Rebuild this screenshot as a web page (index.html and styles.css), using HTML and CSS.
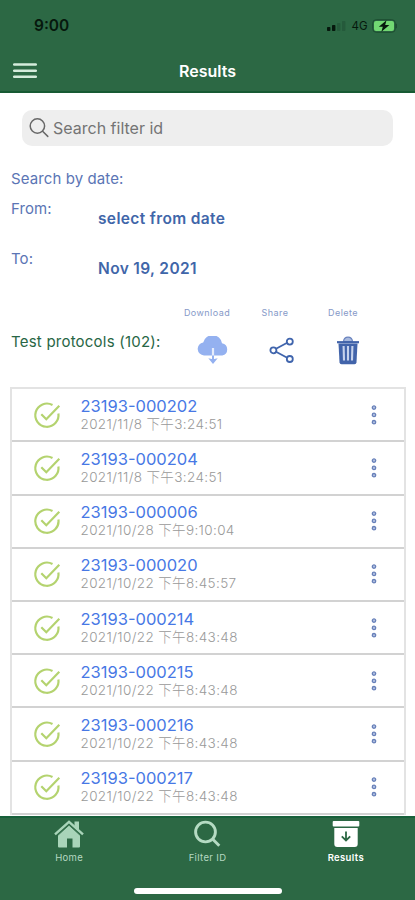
FILE: index.html
```html
<!DOCTYPE html>
<html lang="en">
<head>
<meta charset="utf-8">
<title>Results</title>
<link rel="stylesheet" href="styles.css">
</head>
<body>
<svg width="0" height="0" class="defs">
  <symbol id="check" viewBox="0 0 28 28"><path d="M19.500 4A11.600 11.600 0 1 0 25.400 12.500" /><path d="M8.300 13.200l5 5L26.300 4.700" /></symbol>
  <symbol id="dots" viewBox="0 0 8 22"><circle cx="4" cy="3.600" r="1.700"/><circle cx="4" cy="10.900" r="1.700"/><circle cx="4" cy="18.200" r="1.700"/></symbol>
</svg>
<div class="app">
  <header class="top">
    <div class="status">
      <span class="time">9:00</span>
      <div class="signals">
        <svg width="20" height="12" viewBox="0 0 20 12"><rect x="1" y="7" width="3.400" height="4" rx=".8" fill="#06180d"/><rect x="6" y="5" width="3.400" height="6" rx=".8" fill="#06180d"/><rect x="11" y="3" width="3.400" height="8" rx=".8" fill="#255a3b"/><rect x="16" y="1" width="3.400" height="10" rx=".8" fill="#255a3b"/></svg>
        <span class="net">4G</span>
        <svg width="26" height="14" viewBox="0 0 26 14"><rect x=".7" y=".7" width="22.600" height="12.600" rx="3.600" fill="#2c6844" stroke="#1d4d31"/><rect x="2" y="2" width="20" height="10" rx="2" fill="#72d873"/><path d="M24.400 4.800v4.400" stroke="#1d4d31" stroke-width="1.200"/><path d="M14.500 1.200L6.800 7.800h4l-1.400 5 8-6.700h-4.200z" fill="#06180d"/></svg>
      </div>
    </div>
    <div class="nav">
      <svg width="24" height="16" viewBox="0 0 24 16" stroke="#d5ecdc" stroke-width="2.500" stroke-linecap="round"><path d="M1.200 1.600h21.600M1.200 7.700h21.600M1.200 13.800h21.600"/></svg>
      <h1>Results</h1>
    </div>
  </header>
  <main>
    <div class="search">
      <svg width="20" height="20" viewBox="0 0 20 20" fill="none" stroke="#686868" stroke-width="1.500" stroke-linecap="round"><circle cx="8.400" cy="8" r="7.200"/><path d="M13.600 13.300l5.200 5.100"/></svg>
      <span>Search filter id</span>
    </div>
    <section class="dates">
      <div class="label by">Search by date:</div>
      <div class="daterow"><span class="label">From:</span><b>select from date</b></div>
      <div class="daterow"><span class="label">To:</span><b>Nov 19, 2021</b></div>
    </section>
    <section class="tools">
      <h2>Test protocols (102):</h2>
      <div class="tool download"><span>Download</span>
        <svg width="34" height="30" viewBox="0 0 34 30"><path d="M8 19.500a6.600 6.600 0 0 1-.8-13.100A9.600 9.600 0 0 1 26 7.300a6.200 6.200 0 0 1 .2 12.200z" fill="#94b1f0"/><path d="M17 12v8" stroke="#e6edfc" stroke-width="2.200"/><path d="M17 19.500v5" stroke="#94b1f0" stroke-width="2"/><path d="M12.300 22.300l4.700 1 4.700-1L17 28z" fill="#94b1f0"/></svg>
      </div>
      <div class="tool share"><span>Share</span>
        <svg width="26" height="30" viewBox="0 0 26 30" fill="none" stroke="#4065ad" stroke-width="1.800"><path d="M7 12.800L18.200 6.800M7 15.800l11.200 6"/><circle cx="4.400" cy="14.300" r="3"/><circle cx="20.800" cy="5.600" r="3"/><circle cx="20.800" cy="23" r="3"/></svg>
      </div>
      <div class="tool delete"><span>Delete</span>
        <svg width="24" height="30" viewBox="0 0 24 30" fill="none" stroke="#4264aa"><path d="M7.500 5.500Q8 1.200 12 1.200T16.500 5.500z" fill="#a9bade" stroke="#6882bd" stroke-width="1.200"/><path d="M1 6.200h22" stroke-width="2.200"/><path d="M2.500 7.500h19l-1 18.800q-.2 2-2 2H5.500q-1.800 0-2-2z" fill="#4264aa" stroke="none"/><path d="M7.600 10l.4 14.500M12 10v14.500M16.400 10l-.4 14.500" stroke="#c7d3ed" stroke-width="2.100"/></svg>
      </div>
    </section>
    <ul class="list">
      <li><svg class="ck"><use href="#check"/></svg><div class="info"><a>23193-000202</a><time>2021/11/8 下午3:24:51</time></div><svg class="dt"><use href="#dots"/></svg></li>
      <li><svg class="ck"><use href="#check"/></svg><div class="info"><a>23193-000204</a><time>2021/11/8 下午3:24:51</time></div><svg class="dt"><use href="#dots"/></svg></li>
      <li><svg class="ck"><use href="#check"/></svg><div class="info"><a>23193-000006</a><time>2021/10/28 下午9:10:04</time></div><svg class="dt"><use href="#dots"/></svg></li>
      <li><svg class="ck"><use href="#check"/></svg><div class="info"><a>23193-000020</a><time>2021/10/22 下午8:45:57</time></div><svg class="dt"><use href="#dots"/></svg></li>
      <li><svg class="ck"><use href="#check"/></svg><div class="info"><a>23193-000214</a><time>2021/10/22 下午8:43:48</time></div><svg class="dt"><use href="#dots"/></svg></li>
      <li><svg class="ck"><use href="#check"/></svg><div class="info"><a>23193-000215</a><time>2021/10/22 下午8:43:48</time></div><svg class="dt"><use href="#dots"/></svg></li>
      <li><svg class="ck"><use href="#check"/></svg><div class="info"><a>23193-000216</a><time>2021/10/22 下午8:43:48</time></div><svg class="dt"><use href="#dots"/></svg></li>
      <li><svg class="ck"><use href="#check"/></svg><div class="info"><a>23193-000217</a><time>2021/10/22 下午8:43:48</time></div><svg class="dt"><use href="#dots"/></svg></li>
    </ul>
  </main>
  <footer>
    <nav class="tabs">
      <div class="tab"><svg width="30" height="28" viewBox="0 0 30 28"><path d="M4 15L15 5l11 10v11.500q0 1-1 1h-6.500v-9h-5.500v9H5q-1 0-1-1z" fill="#a9d4b9"/><path d="M20.500 1.500H25v10l-4.500-4z" fill="#a9d4b9"/><path d="M2.500 16.600L15 5.200 27.500 16.600" fill="none" stroke="#2c6844" stroke-width=".8"/><path d="M1 14.400L15 1.800l14 12.600" fill="none" stroke="#a9d4b9" stroke-width="2.400"/></svg><span>Home</span></div>
      <div class="tab"><svg width="30" height="28" viewBox="0 0 30 28" fill="none" stroke="#b5dbc3" stroke-width="2.900"><circle cx="13.500" cy="12" r="9.900"/><path d="M20.300 18.800l7 7"/></svg><span>Filter ID</span></div>
      <div class="tab active"><svg width="30" height="28" viewBox="0 0 30 28"><rect x="1.700" y="1" width="26.600" height="5.600" rx="1" fill="#fff"/><path d="M3.300 8h23.400v16q0 3-3 3H6.300q-3 0-3-3z" fill="#fff"/><path d="M15 11.500v8.500M10.800 16.300L15 20.500l4.200-4.200" fill="none" stroke="#2c6844" stroke-width="1.800"/></svg><span>Results</span></div>
    </nav>
    <div class="home"></div>
  </footer>
</div>
</body>
</html>
```
FILE: styles.css
```css
* { box-sizing: border-box; }
body { margin: 0; background: #fff; font-family: Inter, "Noto Sans CJK SC", sans-serif; }
.defs { display: none; }
svg { display: block; flex: none; }
h1, h2, ul { margin: 0; padding: 0; font: inherit; }
.app { width: 415px; height: 900px; overflow: hidden; display: flex; flex-direction: column; }
.top { height: 93px; flex: none; background: #2c6844; border-bottom: 2px solid #175a33; }
.status { height: 50px; display: flex; justify-content: space-between; align-items: center; padding: 1px 17px 0 34px; color: #06180d; }
.time { font-size: 15.5px; font-weight: 600; }
.signals { display: flex; align-items: center; }
.net { font-size: 11.5px; letter-spacing: .3px; margin: 0 4px 0 5px; }
.nav { height: 42px; display: grid; grid-template-columns: 24px 1fr 24px; align-items: center; padding: 0 13px; }
.nav h1 { text-align: center; color: #fff; font-size: 16px; font-weight: 600; line-height: 20px; }
main { flex: 1; min-height: 0; }
.search { height: 36px; margin: 17px 22px 0; border-radius: 10px; background: #eee; display: flex; align-items: center; gap: 4px; padding-left: 7px; color: #747474; font-size: 16px; }
.dates { padding: 23px 11px 0; color: #5b75b5; font-size: 15px; line-height: 20px; letter-spacing: .1px; }
.daterow { display: flex; height: 50px; padding-top: 10px; }
.daterow .label { width: 87px; }
.daterow b { padding-top: 10px; color: #3f66a9; font-size: 15.5px; font-weight: 600; letter-spacing: .36px; }
.tools { height: 98.3px; padding: 18px 0 0 11px; display: flex; }
.tools h2 { width: 162px; padding-top: 25px; font-size: 15px; line-height: 20px; letter-spacing: .22px; color: #286645; white-space: nowrap; }
.tool { display: flex; flex-direction: column; align-items: center; width: 68px; gap: 17px; font-size: 9px; line-height: 12px; letter-spacing: .45px; color: #8699c8; }
.download svg { margin-left: 12px; }
.share svg { margin-left: 13px; }
.delete svg { margin-left: 10px; }
.list { list-style: none; margin: 0 9px 0 10px; border: 2px solid #e3e3e3; border-bottom: 0; }
.list li { height: 53.2px; display: flex; align-items: center; border-bottom: 2.5px solid #d2d2d2; padding-left: 21px; }
.ck { width: 28px; height: 28px; fill: none; stroke: #b4d36f; stroke-width: 2.2; }
.info { margin-left: 19.5px; flex: 1; white-space: nowrap; }
.info a, .info time { display: block; }
.info a { color: #4778e5; font-size: 16.5px; line-height: 18px; }
.info time { color: #999; font-size: 13.5px; line-height: 18px; letter-spacing: .37px; font-weight: 300; }
.dt { width: 8px; height: 22px; margin-right: 26px; fill: #b3c2e2; stroke: #6880b9; stroke-width: 1.3; }
footer { height: 84px; flex: none; background: #2c6844; border-top: 2px solid #17603a; }
.tabs { display: grid; grid-template-columns: repeat(3, 1fr); padding-top: 2px; }
.tab { display: flex; flex-direction: column; align-items: center; gap: 3px; color: #b5d8c2; font-size: 9.5px; letter-spacing: .35px; line-height: 13px; }
.tab.active { color: #fff; font-weight: 600; }
.home { width: 148px; height: 6px; border-radius: 3px; background: #fff; margin: 24px auto 0; }
```
